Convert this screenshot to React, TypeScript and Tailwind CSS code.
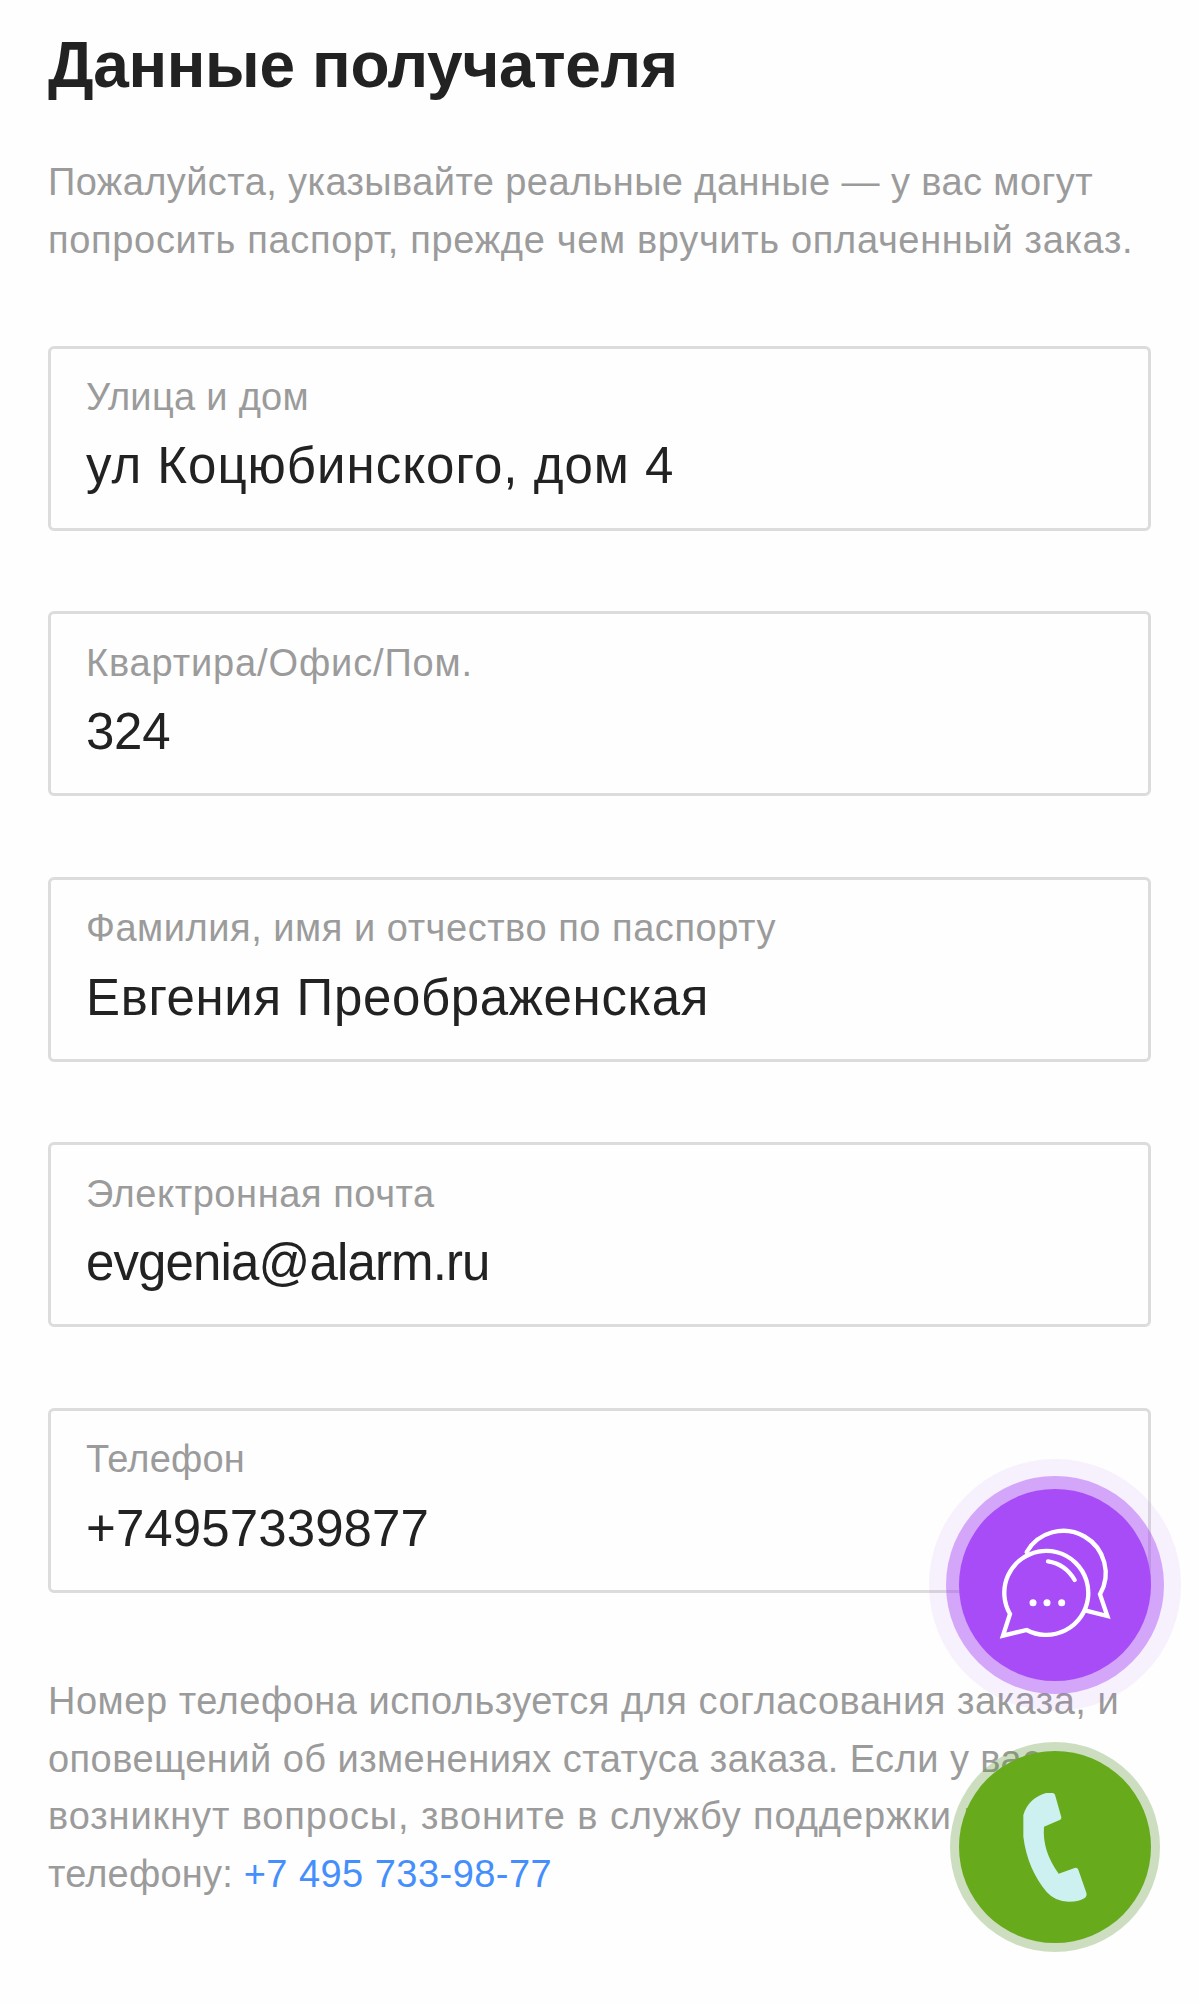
const intro = [
    { text: "Пожалуйста, указывайте реальные данные — у вас могут", className: "tracking-[0.41px]" },
    { text: "попросить паспорт, прежде чем вручить оплаченный заказ.", className: "tracking-[0.67px]" },
];

const fields = [
    {
        label: "Улица и дом",
        value: "ул Коцюбинского, дом 4",
        labelClass: "tracking-[0.3px]",
        valueClass: "tracking-[1px]",
    },
    {
        label: "Квартира/Офис/Пом.",
        value: "324",
        labelClass: "tracking-[0.86px]",
        valueClass: "tracking-[-0.3px]",
    },
    {
        label: "Фамилия, имя и отчество по паспорту",
        value: "Евгения Преображенская",
        labelClass: "tracking-[0.54px]",
        valueClass: "tracking-[0.65px]",
    },
    {
        label: "Электронная почта",
        value: "evgenia@alarm.ru",
        labelClass: "tracking-[0.57px]",
        valueClass: "tracking-[-0.87px]",
    },
    {
        label: "Телефон",
        value: "+74957339877",
        labelClass: "tracking-[0.2px]",
        valueClass: "tracking-[0.1px]",
    },
];

function Field({ label, value, labelClass, valueClass }: (typeof fields)[number]) {
    return (
        <div className="h-[185px] rounded-[6px] border-[3px] border-[#dcdcdc] pl-[35px] pt-[24.4px] whitespace-nowrap">
            <p className={`text-[38px] leading-[48px] text-[#9b9b9b] ${labelClass}`}>{label}</p>
            <p className={`mt-[15.5px] text-[51px] leading-[60px] text-[#222] ${valueClass}`}>{value}</p>
        </div>
    );
}

function ChatButton() {
    return (
        <button
            aria-label="Чат"
            className="absolute left-[929px] top-[1459px] flex size-[252px] items-center justify-center rounded-full bg-[#a84cf7]/8"
        >
            <span className="flex size-[218px] items-center justify-center rounded-full bg-[#a84cf7]/45">
                <span className="size-[192px] rounded-full bg-[#a84cf7]">
                    <svg
                        viewBox="117 117 576 576"
                        className="size-full"
                        fill="none"
                        stroke="#fff"
                        strokeWidth="13"
                        strokeLinecap="round"
                    >
                        <path d="M320 306A126 126 0 1 1 540 433L562 498L498 482" />
                        <path d="M270 492A126 126 0 1 1 320 540L249 557Z" />
                        <path d="M384 334Q436 342 464 390" />
                        <g fill="#fff" stroke="none">
                            <circle cx="339" cy="458" r="10.5" />
                            <circle cx="381" cy="458" r="10.5" />
                            <circle cx="425" cy="458" r="10.5" />
                        </g>
                    </svg>
                </span>
            </span>
        </button>
    );
}

function CallButton() {
    return (
        <button
            aria-label="Позвонить"
            className="absolute left-[950px] top-[1742px] flex size-[210px] items-center justify-center rounded-full bg-[#58942d]/30"
        >
            <span className="size-[192px] rounded-full bg-[#67ab1d]">
                <svg viewBox="117 93 576 576" className="size-full" fill="#cdf0f1">
                    <path d="M378 219H398Q403 219 405 224L424 292Q425 298 419 300L372 320Q366 392 416 461L464 444Q472 442 475 449L499 518Q502 527 494 534Q480 545 446 545Q406 545 380 516Q322 446 310 350V285Q324 236 378 219Z" />
                </svg>
            </span>
        </button>
    );
}

export default function App() {
    return (
        <div
            className="relative h-[2004px] w-[1199px] overflow-hidden bg-[#fefefe] px-[48px] pt-[24.5px]"
            style={{ fontFamily: "'Liberation Sans', Arial, sans-serif" }}
        >
            <h1 className="text-[64px] font-bold leading-[80px] tracking-[-0.35px] text-[#222]">Данные получателя</h1>

            <p className="mt-[49.5px] text-[38px] leading-[57.5px] whitespace-nowrap text-[#9b9b9b]">
                {intro.map((line) => (
                    <span key={line.text} className={`block ${line.className}`}>
                        {line.text}
                    </span>
                ))}
            </p>

            <div className="mt-[76.6px] flex flex-col gap-[80.6px]">
                {fields.map((field) => (
                    <Field key={field.label} {...field} />
                ))}
            </div>

            <p className="mt-[80.5px] text-[38px] leading-[57.5px] whitespace-nowrap text-[#9b9b9b]">
                <span className="block tracking-[0.52px]">Номер телефона используется для согласования заказа, и</span>
                <span className="block tracking-[0.45px]">оповещений об изменениях статуса заказа. Если у вас</span>
                <span className="block tracking-[0.9px]">возникнут вопросы, звоните в службу поддержки по</span>
                <span className="block tracking-[0.2px]">
                    телефону:{" "}
                    <a href="tel:+74957339877" className="tracking-[0.46px] text-[#458ffc]">
                        +7 495 733-98-77
                    </a>
                </span>
            </p>

            {/* Floating buttons */}
            <ChatButton />
            <CallButton />
        </div>
    );
}
